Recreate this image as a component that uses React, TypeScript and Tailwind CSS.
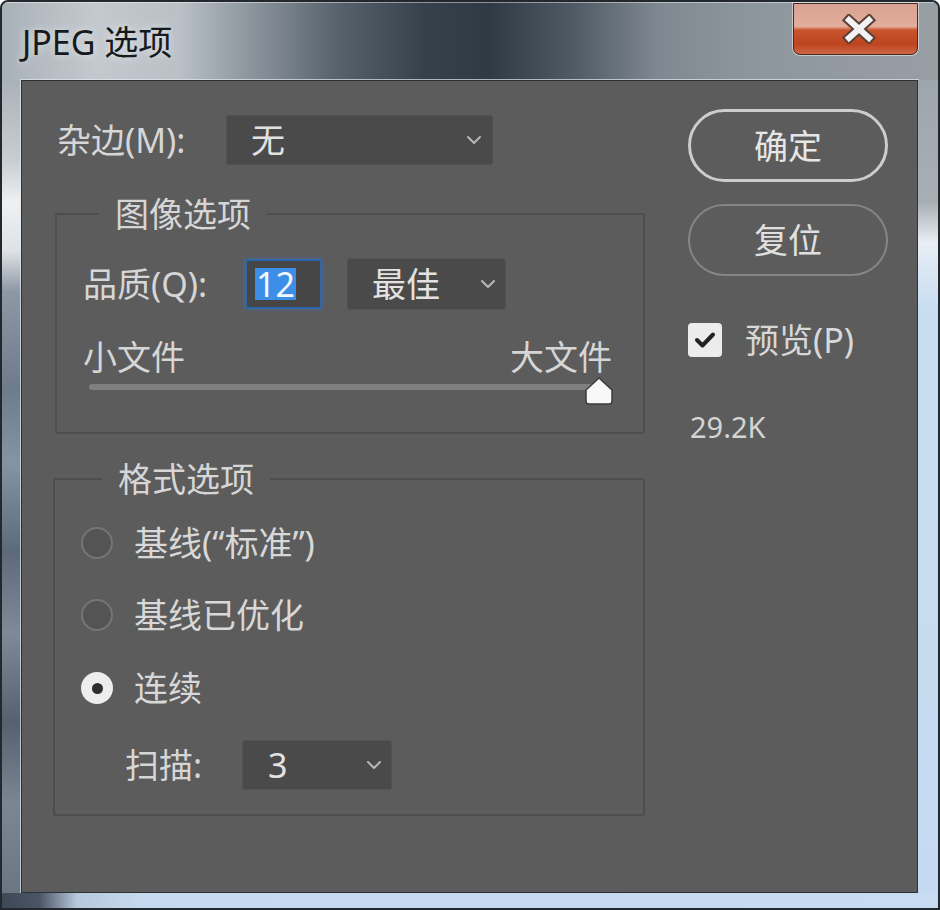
import React from "react";

const Chevron = () => (
  <svg width="16" height="10" viewBox="0 0 16 10" fill="none">
    <path d="M2 2 L8 8 L14 2" stroke="#b8b8b8" strokeWidth="2" strokeLinecap="round" strokeLinejoin="round" />
  </svg>
);

const Radio = ({ checked }: { checked?: boolean }) =>
  checked ? (
    <div className="w-[32px] h-[32px] rounded-full bg-[#ededed] flex items-center justify-center shrink-0">
      <div className="w-[11px] h-[11px] rounded-full bg-[#2e2e2e]" />
    </div>
  ) : (
    <div className="w-[32px] h-[32px] rounded-full bg-[#545454] border-2 border-[#767676] shrink-0" />
  );

const RadioRow = ({ checked, label, cls }: { checked?: boolean; label: string; cls: string }) => (
  <div className={"flex items-center h-[50px] pl-[26px] " + cls}>
    <Radio checked={checked} />
    <span className="ml-[21px] text-[34px] leading-none text-[#d8d8d8]">{label}</span>
  </div>
);

export default function App() {
  return (
    <div className="w-[940px] h-[910px] overflow-hidden flex flex-col border-2 border-[#23282e] rounded-t-[8px] bg-[#5c5c5c] [font-family:'Noto_Sans','Noto_Sans_CJK_SC',sans-serif]">
      {/* Title bar */}
      <div className="h-[78px] shrink-0 flex justify-between pl-[20px] pr-[20px] shadow-[inset_0_1px_0_rgba(255,255,255,0.45)] bg-[linear-gradient(90deg,#a9b1b8_0%,#c3c9ce_10%,#b9c0c6_19%,#8a939b_27%,#56616b_36%,#36414c_45%,#2f3a45_52%,#4f5a64_61%,#7f8890_70%,#8e969d_80%,#979ea4_100%)]">
        <div className="mt-[14px] h-[52px] flex items-center text-[34px] leading-none text-[#161a1e] [text-shadow:0_0_8px_rgba(255,255,255,0.7)]">
          JPEG 选项
        </div>
        <div className="mt-[1px] w-[125px] h-[52px] rounded-b-[7px] border border-[#4a2a22] shadow-[0_0_0_1px_rgba(235,235,235,0.6)] flex items-center justify-center bg-[linear-gradient(180deg,#d7a291_0%,#e2ad9b_45%,#c8552e_52%,#bd4520_80%,#cd6744_100%)]">
          <svg width="34" height="30" viewBox="0 0 34 30" className="ml-[6px]">
            <path d="M7 6 L27 24 M27 6 L7 24" stroke="#5b4038" strokeWidth="10" strokeLinecap="square" />
            <path d="M7 6 L27 24 M27 6 L7 24" stroke="#f2f2f2" strokeWidth="6" strokeLinecap="square" />
          </svg>
        </div>
      </div>

      {/* Middle */}
      <div className="flex-1 flex min-h-0">
        <div className="w-[19px] shrink-0 bg-[linear-gradient(180deg,#aab2b9_0%,#c9ced2_10%,#eef0f1_15%,#dfe3e6_21%,#8d98a5_26%,#6e7b8b_38%,#8693a2_47%,#5d6a7a_58%,#7f8a98_68%,#55616f_79%,#7b8693_89%,#6a7683_100%)]" />

        <div className="flex-1 flex bg-[#5c5c5c] border border-[#2c3238] shadow-[0_0_0_1px_rgba(225,232,240,0.7)] pl-[31px]">
          {/* Left column */}
          <div className="w-[592px] shrink-0 flex flex-col">
            <div className="mt-[34px] h-[50px] flex items-center">
              <span className="w-[173px] pl-[4px] text-[34px] leading-none text-[#d6d6d6]">杂边(M):</span>
              <div className="w-[267px] h-[50px] rounded-[3px] bg-[#4a4a4a] border border-[#525252] flex items-center justify-between pl-[24px] pr-[10px]">
                <span className="text-[34px] leading-none text-[#e2e2e2]">无</span>
                <Chevron />
              </div>
            </div>

            {/* Group 1 */}
            <div className="relative mt-[48px] ml-[2px] w-[590px] h-[221px] border-2 border-[#4d4d4d] rounded-[2px] flex flex-col pl-[26px] pr-[31px]">
              <span className="absolute left-[42px] -top-[19px] px-[16px] bg-[#5c5c5c] text-[34px] leading-[36px] text-[#d6d6d6]">图像选项</span>
              <div className="mt-[43px] h-[52px] flex items-center">
                <span className="w-[162px] text-[34px] leading-none text-[#d6d6d6]">品质(Q):</span>
                <div className="w-[77px] h-[50px] border-2 border-[#2f67ad] bg-[#464646] shadow-[0_0_4px_rgba(60,120,200,0.6)] flex items-center pl-[8px]">
                  <span className="bg-[#3d8ee6] text-[#f4f8ff] text-[34px] leading-[32px] px-[1px]">12</span>
                </div>
                <div className="ml-[25px] w-[159px] h-[52px] rounded-[3px] bg-[#4a4a4a] border border-[#525252] flex items-center justify-between pl-[24px] pr-[9px]">
                  <span className="text-[34px] leading-none text-[#e2e2e2]">最佳</span>
                  <Chevron />
                </div>
              </div>
              <div className="mt-[30px] h-[34px] flex items-center justify-between">
                <span className="text-[34px] leading-none text-[#d6d6d6]">小文件</span>
                <span className="text-[34px] leading-none text-[#d6d6d6]">大文件</span>
              </div>
              <div className="relative mt-[10px] ml-[6px] w-[510px] h-[6px] rounded-full bg-[#808080]">
                <svg width="32" height="30" viewBox="0 0 32 30" className="absolute -right-[16px] -top-[8px]">
                  <path d="M16 2 L29 14 L29 25 Q29 28 26 28 L6 28 Q3 28 3 25 L3 14 Z" fill="#f8f8f8" stroke="#3c3c3c" strokeWidth="1.5" strokeLinejoin="round" />
                </svg>
              </div>
            </div>

            {/* Group 2 */}
            <div className="relative mt-[44px] w-[592px] h-[338px] border-2 border-[#4d4d4d] rounded-[2px] flex flex-col">
              <span className="absolute left-[47px] -top-[19px] px-[16px] bg-[#5c5c5c] text-[34px] leading-[36px] text-[#d6d6d6]">格式选项</span>
              <RadioRow label={"基线(“标准”)"} cls="mt-[38px]" />
              <RadioRow label="基线已优化" cls="mt-[22px]" />
              <RadioRow checked label="连续" cls="mt-[23px]" />
              <div className="mt-[27px] h-[50px] flex items-center pl-[70px]">
                <span className="w-[117px] text-[34px] leading-none text-[#d6d6d6]">扫描:</span>
                <div className="w-[150px] h-[50px] rounded-[3px] bg-[#4a4a4a] border border-[#525252] flex items-center justify-between pl-[25px] pr-[9px]">
                  <span className="text-[34px] leading-none text-[#e2e2e2]">3</span>
                  <Chevron />
                </div>
              </div>
            </div>
          </div>

          {/* Right column */}
          <div className="ml-[43px] w-[200px] shrink-0 flex flex-col">
            <div className="mt-[28px] h-[73px] rounded-full border-[3px] border-[#cdcdcd] flex items-center justify-center text-[34px] leading-none text-[#e6e6e6]">
              确定
            </div>
            <div className="mt-[22px] h-[72px] rounded-full border-2 border-[#858585] flex items-center justify-center text-[34px] leading-none text-[#e0e0e0]">
              复位
            </div>
            <div className="mt-[46px] h-[36px] flex items-center">
              <div className="w-[34px] h-[34px] rounded-[4px] bg-[#ececec] flex items-center justify-center">
                <svg width="22" height="18" viewBox="0 0 22 18" fill="none">
                  <path d="M3 9 L8.5 14.5 L19 3.5" stroke="#222222" strokeWidth="4" strokeLinecap="round" strokeLinejoin="round" />
                </svg>
              </div>
              <span className="ml-[23px] text-[34px] leading-none text-[#d8d8d8]">预览(P)</span>
            </div>
            <div className="mt-[54px] pl-[2px] text-[29px] leading-none text-[#d4d4d4]">29.2K</div>
          </div>
        </div>

        <div className="w-[20px] shrink-0 bg-[linear-gradient(180deg,#9ea6ad_0%,#a7aeb4_15%,#e8eef4_20%,#c9ddf2_28%,#c5daf0_100%)]" />
      </div>

      {/* Bottom frame */}
      <div className="h-[15px] shrink-0 bg-[linear-gradient(90deg,#3e4957_0%,#4a5565_4%,#b7c9dc_8%,#c6daef_15%,#c8dcf1_100%)]" />
    </div>
  );
}
